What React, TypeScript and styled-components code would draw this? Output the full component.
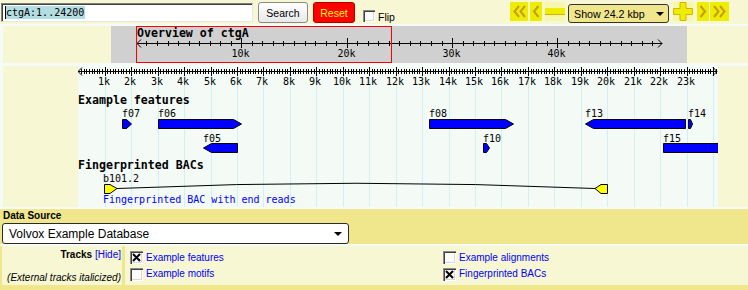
import React from 'react';
import styled, { createGlobalStyle } from 'styled-components';

const CREAM = '#f7f7d3';
const KHAKI = '#f0e68c';
const PAGE = '#f5fbf7';

const Global = createGlobalStyle`
  html, body { margin: 0; padding: 0; background: ${PAGE}; }
  body { font-family: "Liberation Sans", Arial, sans-serif; font-size: 10px; color: #000; }
`;

const Page = styled.div`
  width: 748px;
  display: flex;
  flex-direction: column;
`;

/* ---------- toolbar ---------- */
const Toolbar = styled.div`
  height: 24px;
  background: ${CREAM};
  display: flex;
  align-items: flex-start;
  padding-left: 1px;
`;

const SearchBox = styled.div`
  margin-top: 3px;
  width: 252px;
  height: 19px;
  box-sizing: border-box;
  background: #fff;
  border: 1px solid;
  border-color: #7f7f7f #e6e6e6 #e6e6e6 #7f7f7f;
  box-shadow: inset 1px 1px 0 #404040;
  display: flex;
  align-items: center;
  padding-left: 3px;
  font-family: "DejaVu Sans Mono", monospace;
  font-size: 10px;
`;

const Selected = styled.span`
  background: #b2dde1;
  line-height: 13px;
  padding-right: 1px;
  border-left: 1px solid #000;
`;

const Button = styled.button<{ $danger?: boolean; $w: number }>`
  margin: 2px 0 0 5px;
  width: ${(p) => p.$w}px;
  height: 21px;
  box-sizing: border-box;
  padding: 0;
  font-family: "Liberation Sans", Arial, sans-serif;
  font-size: 10.5px;
  border-radius: 3px;
  border: 1px solid ${(p) => (p.$danger ? '#b00000' : '#8a8a8a')};
  background: ${(p) => (p.$danger ? '#ff0000' : 'linear-gradient(#ffffff, #e9e9e9)')};
  color: ${(p) => (p.$danger ? '#ffff00' : '#000')};
`;

const Check = styled.span<{ $size: number; $ml?: number; $mt?: number }>`
  display: inline-flex;
  align-items: center;
  justify-content: center;
  flex: none;
  width: ${(p) => p.$size}px;
  height: ${(p) => p.$size}px;
  margin-left: ${(p) => p.$ml ?? 0}px;
  margin-top: ${(p) => p.$mt ?? 0}px;
  box-sizing: border-box;
  background: #fbfbfb;
  box-shadow: inset 1px 1px 0 #8a8a8a, inset 2px 2px 0 #404040, inset -1px -1px 0 #ffffff, inset -2px -2px 0 #d8d8d8;
`;

const FlipLabel = styled.span`
  margin: 11px 0 0 3px;
  font-size: 10.5px;
  line-height: 12px;
`;

const Nav = styled.div`
  margin-left: auto;
  margin-right: 19px;
  display: flex;
  align-items: flex-start;
`;

const NavBtn = styled.span<{ $w: number; $ml: number; $pale?: boolean }>`
  display: inline-flex;
  width: ${(p) => p.$w}px;
  height: 19px;
  margin: 2px 0 0 ${(p) => p.$ml}px;
  background: ${(p) => (p.$pale ? '#f6f6ac' : '#eded00')};
  svg { display: block; }
`;

const SpanSelect = styled.div`
  margin: 4px 0 0 3px;
  width: 101px;
  height: 19px;
  box-sizing: border-box;
  border: 1px solid #333;
  border-radius: 3px;
  background: #f0e68c;
  display: flex;
  align-items: center;
  justify-content: space-between;
  padding: 0 4px 0 5px;
  font-size: 10.7px;
`;

const DownArrow = styled.span<{ $w?: number }>`
  width: 0;
  height: 0;
  border-left: ${(p) => (p.$w ?? 8) / 2}px solid transparent;
  border-right: ${(p) => (p.$w ?? 8) / 2}px solid transparent;
  border-top: ${(p) => (p.$w ?? 8) / 2}px solid #000;
`;

/* ---------- panels ---------- */
const OverviewRow = styled.div`
  margin: 2px 0 0 3px;
  height: 37px;
  background: ${CREAM};
  padding-left: 108px;
  display: flex;
  svg { display: block; }
`;

const DetailRow = styled.div`
  margin: 3px 0 0 3px;
  height: 141px;
  background: ${CREAM};
  padding-left: 75px;
  display: flex;
  svg { display: block; }
`;

/* ---------- data source ---------- */
const SourceBar = styled.div`
  margin-top: 2px;
  height: 35px;
  background: ${KHAKI};
  display: flex;
  flex-direction: column;
  align-items: flex-start;
`;

const SourceTitle = styled.div`
  margin: 1px 0 0 3px;
  font-weight: bold;
  font-size: 10px;
  line-height: 12px;
`;

const SourceSelect = styled.div`
  margin: 1px 0 0 2px;
  width: 347px;
  height: 21px;
  box-sizing: border-box;
  border: 1px solid #2a2a2a;
  border-radius: 3px;
  background: #fff;
  display: flex;
  align-items: center;
  justify-content: space-between;
  padding: 0 6px 0 6px;
  font-size: 12px;
`;

/* ---------- tracks ---------- */
const TracksTable = styled.div`
  margin-top: 2px;
  background: ${KHAKI};
  padding: 0 0 6px 2px;
  display: grid;
  grid-template-columns: 120px 1fr;
  column-gap: 3px;
`;

const TracksLabel = styled.div`
  background: ${CREAM};
  height: 39px;
  box-sizing: border-box;
  padding: 2.5px 1px 0 0;
  text-align: right;
  line-height: 12px;
`;

const Note = styled.div`
  margin-top: 11px;
  font-style: italic;
  white-space: nowrap;
`;

const Link = styled.span`
  color: #0000ff;
`;

const TrackList = styled.div`
  background: ${CREAM};
  height: 39px;
  box-sizing: border-box;
  padding: 3.5px 0 0 5px;
  display: grid;
  grid-template-columns: 313px 1fr;
  grid-auto-rows: 16.5px;
`;

const TrackItem = styled.div`
  display: flex;
  align-items: center;
  line-height: 12px;
  color: #0000ff;
`;

const TrackName = styled.span`
  margin-left: 3px;
`;

/* ---------- drawings ---------- */
const MONO = '"DejaVu Sans Mono", monospace';

const CheckMark = () => (
  <svg width="9" height="9" viewBox="0 0 9 9">
    <path d="M1 1 L8 8 M8 1 L1 8" stroke="#000" strokeWidth="2" />
  </svg>
);

const Overview = () => {
  const scale = 10.54;
  const x0 = 24.9;
  const ticks = [];
  for (let k = 1; k < 50; k++) {
    const x = Math.round(x0 + k * scale) + 0.5;
    const major = k % 10 === 0;
    ticks.push(
      <line key={k} x1={x} x2={x} y1={major ? 12 : 14.5} y2={major ? 21.5 : 20} stroke="#000" />
    );
    if (major)
      ticks.push(
        <text key={'t' + k} x={x - 1} y={30.5} textAnchor="middle" fontFamily={MONO} fontSize={10}>
          {k}k
        </text>
      );
  }
  return (
    <svg width="576" height="37" shapeRendering="crispEdges">
      <rect x="0" y="0" width="576" height="37" fill="#d0d0d0" />
      <text x="26" y="11" fontFamily={MONO} fontWeight="bold" fontSize={11.6}>
        Overview of ctgA
      </text>
      <line x1="26" x2="551" y1="17.5" y2="17.5" stroke="#000" />
      <path d="M30 13.5 L26 17.5 L30 21.5 M547 13.5 L551 17.5 L547 21.5" stroke="#000" fill="none" shapeRendering="auto" />
      {ticks}
      <rect x="25.5" y="0.5" width="255" height="36" fill="none" stroke="#ff0000" />
    </svg>
  );
};

type Feat = { name: string; row: number; x1: number; x2: number; dir: number };
const features: Feat[] = [
  { name: 'f07', row: 0, x1: 44, x2: 53, dir: 1 },
  { name: 'f06', row: 0, x1: 80, x2: 163, dir: 1 },
  { name: 'f08', row: 0, x1: 351, x2: 435, dir: 1 },
  { name: 'f13', row: 0, x1: 507, x2: 607, dir: -1 },
  { name: 'f14', row: 0, x1: 610, x2: 614, dir: 1 },
  { name: 'f05', row: 1, x1: 125, x2: 159, dir: -1 },
  { name: 'f10', row: 1, x1: 405, x2: 411, dir: 1 },
  { name: 'f15', row: 1, x1: 585, x2: 650, dir: 0 },
];

const featPath = (f: Feat) => {
  const top = f.row === 0 ? 53.5 : 77.5;
  const bot = top + 9;
  const mid = top + 4.5;
  const a = f.x1 + 0.5;
  const b = f.x2 + 0.5;
  const head = Math.min(8, Math.round((f.x2 - f.x1) * 0.5));
  if (f.dir === 1) return `M${a} ${top} H${b - head} L${b} ${mid} L${b - head} ${bot} H${a} Z`;
  if (f.dir === -1) return `M${a} ${mid} L${a + head} ${top} H${b} V${bot} H${a + head} Z`;
  return `M${a} ${top} H${b} V${bot} H${a} Z`;
};

const Detail = () => {
  const kb = 26.446;
  const x0 = 0.3;
  const grid = [];
  const ticks = [];
  for (let k = 1; k <= 24; k++) {
    const x = Math.round(x0 + k * kb) + 0.5;
    grid.push(<line key={'g' + k} x1={x} x2={x} y1={10} y2={141} stroke="#d2f1f2" />);
  }
  for (let i = 1; i <= 241; i++) {
    const x = Math.round(x0 + (i * kb) / 10) + 0.5;
    const major = i % 10 === 0;
    ticks.push(
      <line key={'k' + i} x1={x} x2={x} y1={major ? 1 : 3} y2={major ? 10 : 8} stroke="#000" />
    );
    if (major && i <= 230)
      ticks.push(
        <text key={'l' + i} x={x - 1.5} y={19} textAnchor="middle" fontFamily={MONO} fontSize={10}>
          {i / 10}k
        </text>
      );
  }
  return (
    <svg width="640" height="141" shapeRendering="crispEdges">
      <rect x="0" y="0" width="640" height="141" fill="#f4faf6" />
      {grid}
      <line x1="0" x2="639" y1="5.5" y2="5.5" stroke="#000" />
      <path d="M4 1.5 L0 5.5 L4 9.5 M635 1.5 L639 5.5 L635 9.5" stroke="#000" fill="none" shapeRendering="auto" />
      {ticks}
      <text x="0" y="38" fontFamily={MONO} fontWeight="bold" fontSize={11.6}>
        Example features
      </text>
      {features.map((f) => (
        <g key={f.name}>
          <text x={f.x1} y={f.row === 0 ? 51 : 75.5} fontFamily={MONO} fontSize={10}>
            {f.name}
          </text>
          <path d={featPath(f)} fill="#0000ff" stroke="#000" shapeRendering="auto" />
        </g>
      ))}
      <text x="0" y="102.7" fontFamily={MONO} fontWeight="bold" fontSize={11.6}>
        Fingerprinted BACs
      </text>
      <text x="25" y="116" fontFamily={MONO} fontSize={10}>
        b101.2
      </text>
      <path d="M39 122.5 Q278 112 517 122.5" stroke="#000" fill="none" shapeRendering="auto" />
      <path d="M26.5 118.5 H32 L39 122.5 L32 127.5 H26.5 Z" fill="#ffff00" stroke="#000" shapeRendering="auto" />
      <path d="M517 122.5 L523 118.5 H529.5 V127.5 H523 Z" fill="#ffff00" stroke="#000" shapeRendering="auto" />
      <text x="25" y="137" fontFamily={MONO} fontSize={10} fill="#0000ff">
        Fingerprinted BAC with end reads
      </text>
    </svg>
  );
};

const GOLD = '#c79a1c';

const tracks = [
  { name: 'Example features', on: true },
  { name: 'Example alignments', on: false },
  { name: 'Example motifs', on: false },
  { name: 'Fingerprinted BACs', on: true },
];

export default function App() {
  return (
    <Page>
      <Global />
      <Toolbar>
        <SearchBox>
          <Selected>ctgA:1..24200</Selected>
        </SearchBox>
        <Button $w={50}>Search</Button>
        <Button $w={42} $danger>
          Reset
        </Button>
        <Check $size={12} $ml={8} $mt={10} />
        <FlipLabel>Flip</FlipLabel>
        <Nav>
          <NavBtn $w={19} $ml={0}>
            <svg width="19" height="19">
              <path d="M9 4 L4.5 9.5 L9 15 M15 4 L10.5 9.5 L15 15" stroke={GOLD} strokeWidth="2" fill="none" />
              <line x1="18.5" x2="18.5" y1="0" y2="19" stroke="#f6f6b0" />
            </svg>
          </NavBtn>
          <NavBtn $w={12} $ml={1}>
            <svg width="12" height="19">
              <path d="M8.5 4 L4 9.5 L8.5 15" stroke={GOLD} strokeWidth="2" fill="none" />
            </svg>
          </NavBtn>
          <NavBtn $w={20} $ml={3} $pale>
            <svg width="20" height="19">
              <rect x="0" y="6" width="20" height="7" fill="#eded00" />
              <line x1="0" x2="20" y1="12.5" y2="12.5" stroke="#dcb000" />
            </svg>
          </NavBtn>
          <SpanSelect>
            Show 24.2 kbp
            <DownArrow />
          </SpanSelect>
          <NavBtn $w={20} $ml={4} $pale>
            <svg width="20" height="19">
              <path
                d="M7 0.5 H13 V6.5 H19.5 V12.5 H13 V18.5 H7 V12.5 H0.5 V6.5 H7 Z"
                fill="#eded00"
                stroke="#dcb000"
              />
            </svg>
          </NavBtn>
          <NavBtn $w={12} $ml={4}>
            <svg width="12" height="19">
              <path d="M3.5 4 L8 9.5 L3.5 15" stroke={GOLD} strokeWidth="2" fill="none" />
            </svg>
          </NavBtn>
          <NavBtn $w={19} $ml={1}>
            <svg width="19" height="19">
              <path d="M4 4 L8.5 9.5 L4 15 M10 4 L14.5 9.5 L10 15" stroke={GOLD} strokeWidth="2" fill="none" />
            </svg>
          </NavBtn>
        </Nav>
      </Toolbar>

      <OverviewRow>
        <Overview />
      </OverviewRow>

      <DetailRow>
        <Detail />
      </DetailRow>

      <SourceBar>
        <SourceTitle>Data Source</SourceTitle>
        <SourceSelect>
          Volvox Example Database
          <DownArrow $w={8} />
        </SourceSelect>
      </SourceBar>

      <TracksTable>
        <TracksLabel>
          <div>
            <b>Tracks</b> <Link>[Hide]</Link>
          </div>
          <Note>(External tracks italicized)</Note>
        </TracksLabel>
        <TrackList>
          {tracks.map((t) => (
            <TrackItem key={t.name}>
              <Check $size={13}>{t.on && <CheckMark />}</Check>
              <TrackName>{t.name}</TrackName>
            </TrackItem>
          ))}
        </TrackList>
      </TracksTable>
    </Page>
  );
}
